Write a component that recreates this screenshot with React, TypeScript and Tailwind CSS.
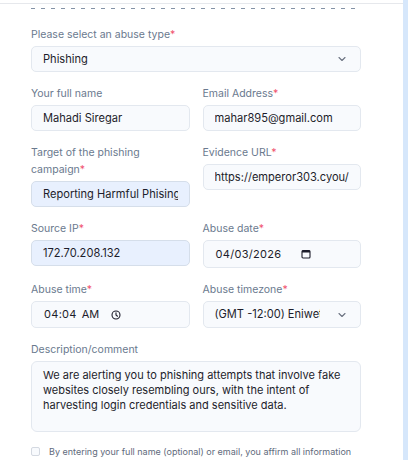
import React from 'react';

const Req = () => <span className="text-[#f0526e]">*</span>;

const Label = ({ children, req }: { children: React.ReactNode; req?: boolean }) => (
  <div className="text-[10.5px] leading-[17px] text-[#6a798e]">
    {children}
    {req && <Req />}
  </div>
);

const inputCls =
  'mt-[3px] block w-full h-[26px] rounded-[5px] border border-[#e3e8ef] bg-[#f8fafd] px-[11px] text-[11.1px] text-[#1d1d2b] outline-none';
const autoCls =
  'mt-[3px] block w-full h-[26px] rounded-[5px] border border-[#d5deea] bg-[#e8f0fe] px-[11px] text-[11.1px] text-[#1d1d2b] outline-none';

const Chevron = () => (
  <svg
    className="pointer-events-none absolute right-[15px] top-1/2 -translate-y-1/2"
    width="8"
    height="5"
    viewBox="0 0 8 5"
    fill="none"
  >
    <path d="M1 1l3 3 3-3" stroke="#6b7280" strokeWidth="1.1" strokeLinecap="round" strokeLinejoin="round" />
  </svg>
);

const CalendarIcon = () => (
  <svg width="10" height="10" viewBox="0 0 10 10" fill="none">
    <rect x="1" y="1.5" width="8" height="7.5" rx="1" stroke="#1d1d2b" strokeWidth="1.1" />
    <rect x="1" y="1.5" width="8" height="2" fill="#1d1d2b" />
  </svg>
);

const ClockIcon = () => (
  <svg width="10" height="10" viewBox="0 0 10 10" fill="none">
    <circle cx="5" cy="5" r="4" stroke="#1d1d2b" strokeWidth="1.1" />
    <path d="M5 2.8V5l1.5 1.2" stroke="#1d1d2b" strokeWidth="1.1" strokeLinecap="round" />
  </svg>
);

export default function App() {
  return (
    <div className="flex h-[460px] w-[408px] overflow-hidden bg-white font-['Inter',sans-serif]">
      <div className="flex-1">
        <div className="mt-[3px] h-px bg-[#e6e8ec]" />
        {/* separador */}
        <div className="ml-[31px] mt-[4px] h-px w-[330px] bg-[repeating-linear-gradient(to_right,#8492a6_0_4px,transparent_4px_10px)]" />

        <form className="ml-[31px] mt-[17px] w-[330px]">
          <Label req>Please select an abuse type</Label>
          <div className="relative">
            <select className={inputCls + ' appearance-none'} defaultValue="Phishing">
              <option>Phishing</option>
              <option>Malware</option>
              <option>Spam</option>
            </select>
            <Chevron />
          </div>

          <div className="mt-[13px] grid grid-cols-2 gap-x-[13px] gap-y-[13px]">
            <div>
              <Label>Your full name</Label>
              <input className={inputCls} defaultValue="Mahadi Siregar" />
            </div>
            <div>
              <Label req>Email Address</Label>
              <input className={inputCls} defaultValue="mahar895@gmail.com" />
            </div>

            <div>
              <Label req>Target of the phishing campaign</Label>
              <input className={autoCls + ' mt-[2px]'} defaultValue="Reporting Harmful Phising Link" />
            </div>
            <div>
              <Label req>Evidence URL</Label>
              <input className={inputCls} defaultValue="https://emperor303.cyou/30" />
            </div>

            <div>
              <Label req>Source IP</Label>
              <input className={autoCls} defaultValue="172.70.208.132" />
            </div>
            <div>
              <Label req>Abuse date</Label>
              <div className="mt-[3px] flex h-[28px] items-center rounded-[5px] border border-[#e3e8ef] bg-[#f8fafd] pl-[12px] text-[11px] text-[#1d1d2b]">
                <span className="tracking-[0.3px]">04/03/2026</span>
                <span className="ml-[20px]">
                  <CalendarIcon />
                </span>
              </div>
            </div>

            <div>
              <Label req>Abuse time</Label>
              <div className="mt-[3px] flex h-[27px] items-center rounded-[5px] border border-[#e3e8ef] bg-[#f8fafd] pl-[12px] text-[11px] text-[#1d1d2b]">
                <span className="tracking-[0.3px]">04:04</span>
                <span className="ml-[5px]">AM</span>
                <span className="ml-[12px]">
                  <ClockIcon />
                </span>
              </div>
            </div>
            <div>
              <Label req>Abuse timezone</Label>
              <div className="relative">
                <select className={inputCls + ' h-[27px] appearance-none pr-[40px]'} defaultValue="-12">
                  <option value="-12">(GMT -12:00) Eniwetok, Kwajalein</option>
                  <option value="-11">(GMT -11:00) Midway Island, Samoa</option>
                </select>
                <Chevron />
              </div>
            </div>
          </div>

          <div className="mt-[13px]">
            <Label>Description/comment</Label>
            <textarea
              className="mt-[3px] block h-[71px] w-full resize-none rounded-[6px] border border-[#e3e8ef] bg-[#f8fafd] px-[11px] py-[6px] text-[11px] leading-[15px] text-[#1d1d2b] outline-none"
              defaultValue="We are alerting you to phishing attempts that involve fake websites closely resembling ours, with the intent of harvesting login credentials and sensitive data."
            />
          </div>

          <label className="mt-[13px] flex items-center gap-[9px]">
            <span className="block h-[9px] w-[9px] shrink-0 rounded-[2px] border border-[#d4d9e1] bg-[#f8fafd]" />
            <span className="whitespace-nowrap text-[9px] text-[#5f6b7c]">
              By entering your full name (optional) or email, you affirm all information
            </span>
          </label>
        </form>
      </div>
      <div className="w-[5px] bg-[#d6e7fb]" />
    </div>
  );
}
